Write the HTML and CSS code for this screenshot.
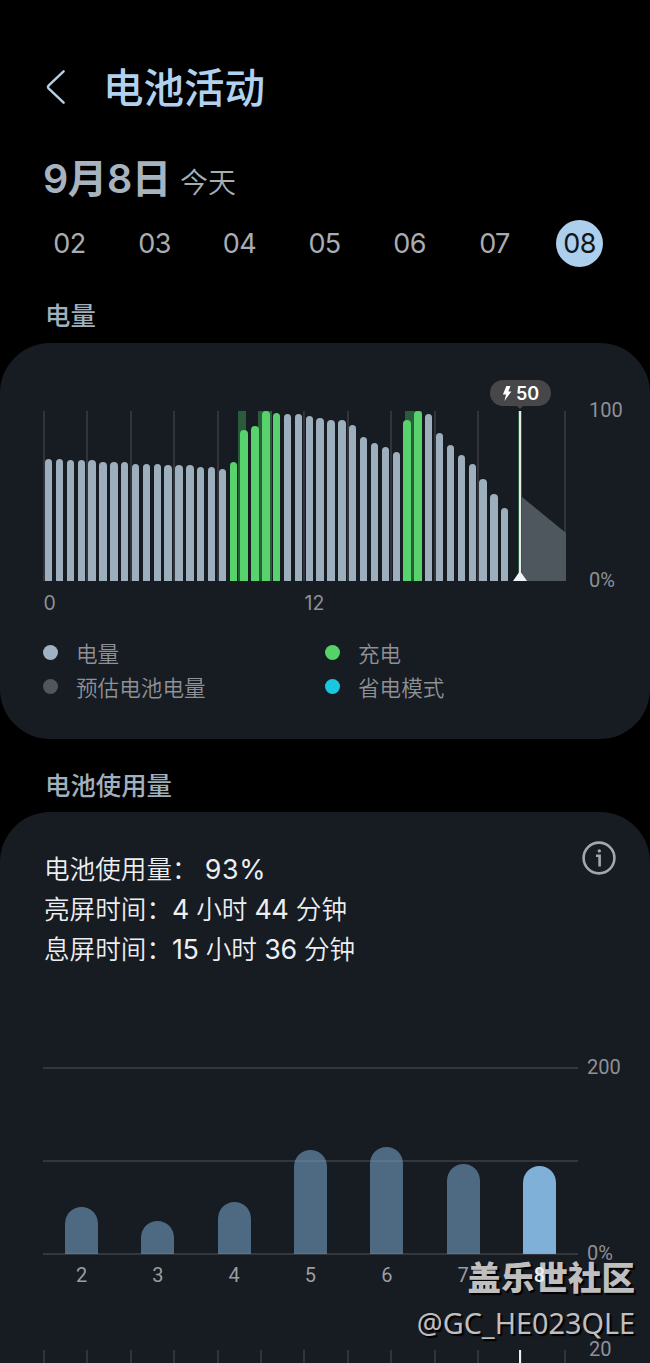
FILE: index.html
```html
<!DOCTYPE html>
<html lang="zh-CN">
<head>
    <meta charset="UTF-8">
    <meta name="viewport" content="width=device-width, initial-scale=1.0">
    <title>电池活动</title>
    <link rel="stylesheet" href="styles.css">
</head>
<body>
    <header class="topbar">
        <svg class="back" viewBox="0 0 20 34" width="20" height="34">
            <path d="M17.6 1.3 2.8 15.4Q1.2 17 2.8 18.6L17.6 32.7"/>
        </svg>
        <h1>电池活动</h1>
    </header>

    <div class="date">
        <span class="date-main">9月8日</span>
        <span class="date-sub">今天</span>
    </div>

    <nav class="days">
        <span>02</span>
        <span>03</span>
        <span>04</span>
        <span>05</span>
        <span>06</span>
        <span>07</span>
        <span class="active">08</span>
    </nav>

    <h2 class="level-title">电量</h2>
    <section class="card level-card">
        <div class="level-chart">
            <div class="level-plot">
                <div class="grid-lines" id="levelGrid"></div>
                <div class="bands" id="bands"></div>
                <div class="bars" id="levelBars"></div>
                <svg class="forecast" viewBox="0 0 44 84" width="44" height="84">
                    <path d="M0 0 44 36V84H0Z"/>
                </svg>
                <div class="now-line"></div>
                <svg class="now-mark" viewBox="0 0 14 10" width="14" height="10">
                    <path d="M7 0 14 10H0Z"/>
                </svg>
                <div class="bubble">
                    <svg viewBox="0 0 10 15" width="10" height="15">
                        <path d="M4.4 0 8.4 0 6.4 5.4 9.4 5.4 2.4 15 4.1 8.6 0.9 8.6Z"/>
                    </svg>
                    <span>50</span>
                </div>
            </div>
            <div class="level-axis">
                <span>100</span>
                <span>0%</span>
            </div>
        </div>
        <div class="hours">
            <span>0</span>
            <span>12</span>
        </div>
        <ul class="legend">
            <li><i class="dot level"></i>电量</li>
            <li><i class="dot charge"></i>充电</li>
            <li><i class="dot estimate"></i>预估电池电量</li>
            <li><i class="dot saver"></i>省电模式</li>
        </ul>
    </section>

    <h2 class="usage-title">电池使用量</h2>
    <section class="card usage-card">
        <div class="usage-head">
            <div class="usage-text">
                <p>电池使用量： <b class="percent">93%</b></p>
                <p>亮屏时间：<b>4</b> 小时 <b>44</b> 分钟</p>
                <p>息屏时间：<b>15</b> 小时 <b>36</b> 分钟</p>
            </div>
            <svg class="info" viewBox="0 0 34 34" width="34" height="34">
                <circle cx="17" cy="17" r="15.4"/>
                <path d="M14 14.7H17.6V25.5"/>
                <circle class="info-dot" cx="17.3" cy="9.9" r="1.7"/>
            </svg>
        </div>
        <div class="usage-chart">
            <div class="usage-plot">
                <div class="usage-bars" id="usageBars"></div>
                <div class="usage-lines"><i></i><i></i><i></i></div>
            </div>
            <div class="usage-axis">
                <span>200</span>
                <span>0%</span>
            </div>
        </div>
        <div class="usage-days" id="usageDays"></div>
        <div class="next-chart">
            <div class="next-plot">
                <div class="grid-lines" id="nextGrid"></div>
                <div class="next-now"></div>
            </div>
            <span>20</span>
        </div>
    </section>

    <div class="watermark">
        <strong>盖乐世社区</strong>
        <span>@GC_HE023QLE</span>
    </div>

    <script>
        // battery level for every half hour, in percent
        const levels = [
            72, 72, 71, 71, 71, 70, 70, 70, 69, 69, 69, 68, 68, 68, 67, 67, 66,
            70, 89, 91, 100, 99, 98, 98, 97, 96, 95, 95, 92, 85, 81, 79, 76,
            95, 100, 98, 87, 80, 74, 69, 60, 51, 43
        ];
        const charging = [17, 18, 19, 20, 21, 33, 34];

        // charging periods, start and length in percent of the day
        const periods = [[37.2, 1.7], [41.1, 2.7], [69.2, 3.3]];

        // battery usage per day
        const usage = [
            { day: 2, value: 50 },
            { day: 3, value: 35 },
            { day: 4, value: 56 },
            { day: 5, value: 111.5 },
            { day: 6, value: 114.5 },
            { day: 7, value: 96 },
            { day: 8, value: 94 }
        ];

        const gridLines = '<i></i>'.repeat(13);
        document.getElementById('levelGrid').innerHTML = gridLines;
        document.getElementById('nextGrid').innerHTML = gridLines;

        document.getElementById('bands').innerHTML = periods.map(([start, length]) =>
            `<i style="left: ${start}%; width: ${length}%"></i>`
        ).join('');

        document.getElementById('levelBars').innerHTML = levels.map((level, i) =>
            `<i class="${charging.includes(i) ? 'charge' : 'level'}" style="height: ${level}%"></i>`
        ).join('');

        document.getElementById('usageBars').innerHTML = usage.map(item =>
            `<i class="${item.day === 8 ? 'today' : ''}" style="height: ${item.value / 2}%"></i>`
        ).join('');

        document.getElementById('usageDays').innerHTML = usage.map(item =>
            `<span class="${item.day === 8 ? 'today' : ''}">${item.day}</span>`
        ).join('');
    </script>
</body>
</html>
```

FILE: styles.css
```css
* {
    box-sizing: border-box;
}
body {
    position: relative;
    width: 650px;
    height: 1363px;
    margin: 0;
    overflow: hidden;
    background-color: #000;
    color: #a9adb2;
    font-family: Inter, "Noto Sans CJK SC", sans-serif;
}
h1, h2, p, ul {
    margin: 0;
    padding: 0;
}

/* header */
.topbar {
    display: flex;
    align-items: center;
    height: 60px;
    margin-top: 60px;
    padding-left: 46px;
}
.back {
    margin-top: -6px;
    fill: none;
    stroke: #b5cfe6;
    stroke-width: 2.4;
    stroke-linecap: round;
}
h1 {
    margin: -2px 0 0 37px;
    color: #b0d2f0;
    font-size: 40.5px;
    font-weight: 500;
    line-height: 58px;
}
.date {
    display: flex;
    align-items: baseline;
    height: 60px;
    margin-top: 29px;
    padding-left: 43px;
    line-height: 61px;
}
.date-main {
    color: #a7b4c0;
    font-size: 39.5px;
    font-weight: 600;
    letter-spacing: -0.4px;
}
.date-sub {
    margin-left: 9px;
    font-size: 28px;
    font-weight: 350;
}
.days {
    display: grid;
    grid-template-columns: repeat(7, 85px);
    justify-content: center;
    justify-items: center;
    height: 47px;
    margin-top: 11px;
    padding-right: 1px;
    font-size: 27px;
    font-weight: 370;
    letter-spacing: -0.6px;
    line-height: 48px;
}
.days .active {
    width: 47px;
    height: 47px;
    border-radius: 50%;
    background-color: #abcfec;
    color: #10151c;
    text-align: center;
}

/* cards */
h2 {
    padding-left: 45px;
    color: #9fb0bf;
    font-size: 25.4px;
    font-weight: 500;
    line-height: 40px;
}
.level-title {
    margin-top: 29px;
}
.usage-title {
    margin-top: 27px;
}
.card {
    border-radius: 50px;
    background-color: #171b22;
}

/* battery level */
.level-card {
    height: 396px;
    margin-top: 7px;
    padding-top: 68px;
}
.level-chart {
    display: flex;
    padding-left: 43px;
}
.level-plot {
    position: relative;
    width: 523px;
    height: 170px;
}
.grid-lines {
    display: flex;
    justify-content: space-between;
    height: 100%;
}
.grid-lines i {
    width: 2px;
    background-color: #31353b;
}
.bands i {
    position: absolute;
    top: 0;
    height: 100%;
    background-color: #2a5c3b;
}
.bars {
    position: absolute;
    top: 0;
    left: 2px;
    display: flex;
    align-items: flex-end;
    gap: 3.47px;
    height: 100%;
}
.bars i {
    width: 7.4px;
    border-radius: 4px 4px 0 0;
}
.bars .level {
    background-color: #9daebd;
}
.bars .charge {
    background-color: #58d26d;
}
.forecast {
    position: absolute;
    right: 0;
    bottom: 0;
    fill: #4e565e;
}
.now-line {
    position: absolute;
    top: 0;
    left: 475px;
    width: 4px;
    height: 100%;
    border: solid #2c5a3f;
    border-width: 0 1px;
    background-color: #e6ece9;
}
.now-mark {
    position: absolute;
    left: 470px;
    bottom: 0;
    fill: #f0f2f5;
}
.bubble {
    position: absolute;
    top: -31px;
    left: 447px;
    display: flex;
    align-items: center;
    justify-content: center;
    gap: 4px;
    width: 61px;
    height: 26px;
    border-radius: 13px;
    background-color: #474749;
    color: #fff;
    font-size: 18px;
    font-weight: 600;
}
.bubble::after {
    content: "";
    position: absolute;
    top: 25px;
    left: 26px;
    border: 4px solid transparent;
    border-top-color: #474749;
    border-bottom: 0;
}
.bubble svg {
    fill: #fff;
}
.level-axis {
    display: flex;
    flex-direction: column;
    justify-content: space-between;
    height: 192px;
    margin: -12px 0 -10px 23px;
    color: #8e9196;
    font: 20px/22px Roboto, sans-serif;
}
.hours {
    display: grid;
    grid-template-columns: 261px 261px;
    margin-top: 11px;
    padding-left: 43.5px;
    color: #8e9196;
    font-size: 19.5px;
    font-weight: 370;
    line-height: 22px;
}
.legend {
    display: grid;
    grid-template-columns: 282px auto;
    grid-auto-rows: 34px;
    margin-top: 23px;
    padding-left: 43px;
    list-style: none;
    color: #8e9196;
    font-size: 21.6px;
    font-weight: 350;
    line-height: 36px;
}
.legend li {
    display: flex;
    align-items: center;
}
.dot {
    width: 15px;
    height: 15px;
    margin: -4px 18px 0 0;
    border-radius: 50%;
}
.dot.level {
    background-color: #a0b1c1;
}
.dot.charge {
    background-color: #55d368;
}
.dot.estimate {
    background-color: #50565e;
}
.dot.saver {
    background-color: #19c8e0;
}

/* battery usage */
.usage-card {
    height: 552px;
    margin-top: 6px;
    padding-top: 38px;
    border-radius: 50px 50px 0 0;
}
.usage-head {
    display: flex;
    justify-content: space-between;
    padding: 0 34px 0 44px;
}
.usage-text {
    color: #eceef0;
    font-size: 25.6px;
    font-weight: 350;
    line-height: 40px;
}
.usage-text p {
    height: 40px;
}
.usage-text b {
    font-size: 26.8px;
    font-weight: 400;
    letter-spacing: -0.3px;
    line-height: 1;
}
.usage-text .percent {
    letter-spacing: 0.6px;
}
.info {
    margin-top: -9px;
    fill: none;
    stroke: #a4a7ac;
    stroke-width: 2.6;
}
.info .info-dot {
    fill: #a4a7ac;
    stroke: none;
}
.usage-chart {
    display: flex;
    height: 188px;
    margin-top: 97px;
    padding-left: 43px;
}
.usage-plot {
    position: relative;
    width: 535px;
}
.usage-bars {
    display: flex;
    align-items: flex-end;
    justify-content: space-between;
    height: 187px;
    padding: 0 22px;
}
.usage-bars i {
    width: 33px;
    border-radius: 17px 17px 0 0;
    background-color: #4d6a82;
}
.usage-bars .today {
    background-color: #7eb0d8;
}
.usage-lines {
    position: absolute;
    inset: 0;
    display: flex;
    flex-direction: column;
    justify-content: space-between;
}
.usage-lines i {
    height: 2px;
    background-color: rgba(150, 155, 160, 0.22);
}
.usage-axis {
    display: flex;
    flex-direction: column;
    justify-content: space-between;
    margin: -11px 0 -9px 9px;
    color: #8e9196;
    font: 20px/22px Roboto, sans-serif;
}
.usage-days {
    display: flex;
    justify-content: space-between;
    width: 491px;
    margin: 9px 0 0 65px;
    color: #9a9da2;
    font: 20px/22px Roboto, sans-serif;
    text-align: center;
}
.usage-days span {
    width: 33px;
}
.usage-days .today {
    position: relative;
    z-index: 1;
    color: #eef0f2;
    font-weight: 500;
}
.next-chart {
    display: flex;
    margin-top: 64px;
    padding-left: 43px;
    color: #8e9196;
    font: 20px/22px Roboto, sans-serif;
}
.next-chart span {
    margin: -12px 0 0 23px;
}
.next-plot {
    position: relative;
    width: 523px;
    height: 14px;
}
.next-now {
    position: absolute;
    top: 0;
    left: 476px;
    width: 2px;
    height: 100%;
    background-color: #eceef0;
}

.watermark {
    position: absolute;
    right: 15px;
    bottom: 18px;
    display: flex;
    flex-direction: column;
    align-items: flex-end;
    color: #bfbfbf;
    text-shadow: 2px 2px 1px #000;
}
.watermark strong {
    font-size: 33.5px;
    font-weight: 900;
    line-height: 46px;
}
.watermark span {
    font: 28.8px/44px "Noto Sans", sans-serif;
}
```
